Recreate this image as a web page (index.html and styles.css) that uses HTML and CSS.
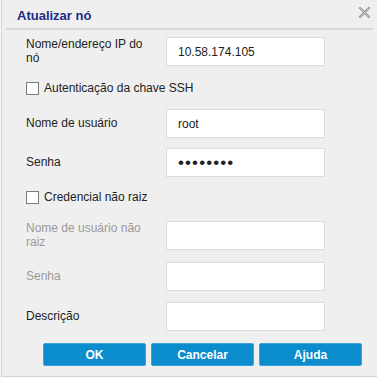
FILE: index.html
```html
<!DOCTYPE html>
<html lang="pt">
<head>
    <meta charset="UTF-8">
    <meta name="viewport" content="width=device-width, initial-scale=1.0">
    <title>Atualizar nó</title>
    <link rel="stylesheet" href="styles.css">
</head>
<body>
    <div class="dialog">
        <!-- Title bar -->
        <div class="dialog-header">
            <h1 class="dialog-title">Atualizar nó</h1>
            <button class="close-btn" aria-label="Fechar">
                <svg width="11" height="11" viewBox="0 0 11 11">
                    <path d="M1 1 L10 10 M10 1 L1 10" stroke="#929292" stroke-width="2.2" stroke-linecap="square"/>
                    <path d="M1 1 L10 10 M10 1 L1 10" stroke="#d4d4d4" stroke-width="0.7" stroke-linecap="square"/>
                </svg>
            </button>
        </div>

        <!-- Form -->
        <form class="node-form">
            <div class="row row-ip">
                <label class="field-label" for="host">Nome/endereço IP do nó</label>
                <input class="field" type="text" id="host" value="10.58.174.105">
            </div>

            <label class="check-row check-ssh">
                <span class="checkbox"></span>
                Autenticação da chave SSH
            </label>

            <div class="row row-user">
                <label class="field-label" for="user">Nome de usuário</label>
                <input class="field" type="text" id="user" value="root">
            </div>

            <div class="row row-pass">
                <label class="field-label" for="pass">Senha</label>
                <div class="field field-dots" id="pass">••••••••</div>
            </div>

            <label class="check-row check-nonroot">
                <span class="checkbox"></span>
                Credencial não raiz
            </label>

            <div class="row row-nruser">
                <label class="field-label disabled" for="nruser">Nome de usuário não raiz</label>
                <input class="field" type="text" id="nruser" disabled>
            </div>

            <div class="row row-nrpass">
                <label class="field-label disabled" for="nrpass">Senha</label>
                <input class="field" type="password" id="nrpass" disabled>
            </div>

            <div class="row row-desc">
                <label class="field-label" for="desc">Descrição</label>
                <input class="field" type="text" id="desc">
            </div>

            <!-- Buttons -->
            <div class="actions">
                <button type="button" class="btn">OK</button>
                <button type="button" class="btn">Cancelar</button>
                <button type="button" class="btn">Ajuda</button>
            </div>
        </form>
    </div>
</body>
</html>
```

FILE: styles.css
```css
body {
    margin: 0;
    background-color: #f7f7f7;
    font-family: "Liberation Sans", Arial, sans-serif;
    font-size: 12px;
    color: #222;
}

.dialog {
    box-sizing: border-box;
    width: 376px;
    height: 377px;
    margin-left: 1px;
    background-color: #efefef;
    border-left: 1px solid #d6d6d6;
    border-bottom: 1px solid #d6d6d6;
}

.dialog-header {
    position: relative;
    height: 28px;
    margin: 0 4px 0 4px;
    border-bottom: 2px solid #d9d9d9;
}

.dialog-title {
    margin: 0;
    padding: 8px 0 0 11px;
    font-size: 13px;
    line-height: 15px;
    font-weight: bold;
    color: #1b2d84;
}

.close-btn {
    position: absolute;
    top: 7px;
    right: 3px;
    width: 11px;
    height: 11px;
    padding: 0;
    border: none;
    background: none;
    cursor: pointer;
}

.close-btn svg {
    display: block;
}

.node-form {
    padding: 7px 0 0 24px;
}

.row {
    display: flex;
    align-items: center;
}

.field-label {
    width: 130px;
    margin-right: 10px;
    line-height: 13.5px;
}

.field-label.disabled {
    color: #9a9a9a;
}

.field {
    box-sizing: border-box;
    width: 159px;
    height: 29px;
    margin: 0;
    padding: 0 0 0 11px;
    border: 1px solid #dcdcdc;
    border-radius: 0;
    background-color: #fff;
    font-family: inherit;
    font-size: 12px;
    color: #222;
    outline: none;
}

.field-dots {
    display: flex;
    align-items: center;
    font-size: 17px;
    letter-spacing: 1.1px;
    padding-top: 1px;
}

.check-row {
    display: flex;
    align-items: center;
    height: 18px;
    cursor: pointer;
}

.checkbox {
    box-sizing: border-box;
    width: 13px;
    height: 13px;
    margin-right: 5px;
    border: 1px solid #7a7a7a;
    background-color: #fff;
}

.check-ssh { margin-top: 13px; }
.row-user { margin-top: 12px; }
.row-pass { margin-top: 10px; }
.check-nonroot { margin-top: 11px; }
.row-nruser { margin-top: 15px; }
.row-nrpass { margin-top: 12px; }
.row-desc { margin-top: 11px; }

.actions {
    display: flex;
    gap: 5px;
    margin-top: 12px;
    padding-left: 17px;
}

.btn {
    box-sizing: border-box;
    width: 103px;
    height: 23px;
    border: 1px solid #3aa3dc;
    border-radius: 2px;
    background-color: #0b8ccd;
    color: #fff;
    font-family: inherit;
    font-size: 12px;
    font-weight: bold;
    cursor: pointer;
}

.btn:hover {
    background-color: #0a7bb5;
}
```
